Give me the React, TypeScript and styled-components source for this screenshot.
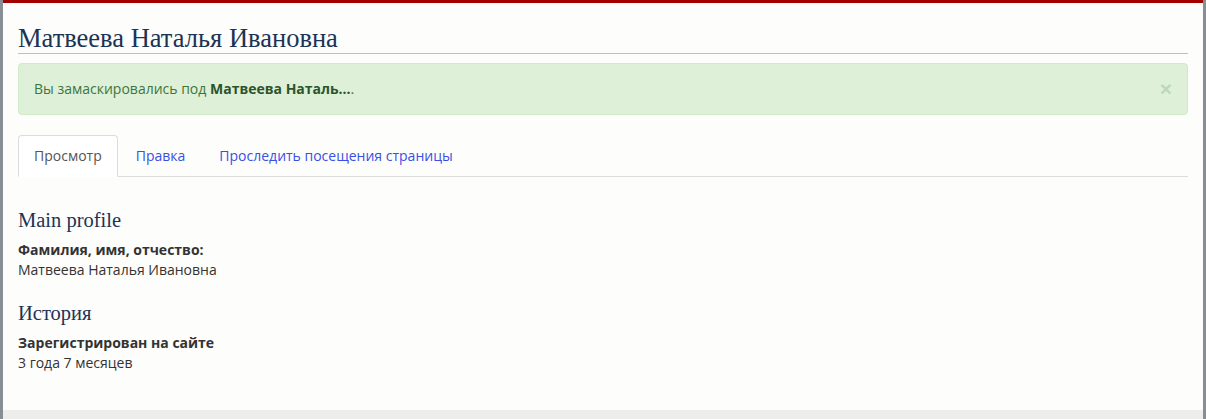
import styled, { createGlobalStyle } from 'styled-components';

const GlobalStyle = createGlobalStyle`
  html, body {
    margin: 0;
    padding: 0;
    background: #ededeb;
  }
  body {
    font-family: "Open Sans", "Liberation Sans", sans-serif;
    font-size: 14px;
    line-height: 20px;
    color: #333;
  }
`;

const Frame = styled.div`
  border-left: 3px solid #878e94;
  border-right: 3px solid #878e94;
  min-height: 419px;
  box-sizing: border-box;
  background: #ededeb;
`;

const Main = styled.main`
  background: #fdfdfb;
  border-top: 3px solid #a30000;
  height: 410px;
  box-sizing: border-box;
  padding: 20px 15px 0;
`;

const Title = styled.h1`
  margin: 0;
  font-family: "Liberation Serif", serif;
  font-weight: normal;
  font-size: 26.5px;
  line-height: 30px;
  color: #1b3456;
  border-bottom: 1px solid #b8c0c8;
`;

const Alert = styled.div`
  margin-top: 9px;
  display: flex;
  align-items: center;
  justify-content: space-between;
  padding: 15px;
  background: #dff0d8;
  border: 1px solid #d0e9c6;
  border-radius: 4px;
  color: #3c763d;

  b {
    color: #2b542c;
  }
`;

const Close = styled.span`
  font-family: "Liberation Sans", sans-serif;
  font-size: 21px;
  font-weight: bold;
  color: #3c763d;
  opacity: 0.2;
  line-height: 20px;
`;

const Tabs = styled.ul`
  list-style: none;
  margin: 20px 0 0;
  padding: 0;
  display: flex;
  border-bottom: 1px solid #ddd;
`;

const Tab = styled.li<{ $active?: boolean }>`
  margin-right: 2px;
  margin-bottom: -1px;

  a {
    display: block;
    padding: 10px 15px;
    line-height: 20px;
    border: 1px solid ${(p) => (p.$active ? '#ddd' : 'transparent')};
    border-bottom-color: transparent;
    border-radius: 4px 4px 0 0;
    background: ${(p) => (p.$active ? '#fff' : 'transparent')};
    color: ${(p) => (p.$active ? '#555' : '#3b4fe4')};
    text-decoration: none;
  }
`;

const Section = styled.h3<{ $first?: boolean }>`
  margin: ${(p) => (p.$first ? '30px' : '20px')} 0 7px;
  font-family: "Liberation Serif", serif;
  font-weight: normal;
  font-size: 20.5px;
  line-height: 26px;
  color: #1b3456;
`;

const Field = styled.div`
  margin-bottom: 10px;
`;

const Label = styled.div`
  font-weight: bold;
`;

export default function App() {
  return (
    <Frame>
      <GlobalStyle />
      <Main>
        <Title>Матвеева Наталья Ивановна</Title>
        <Alert>
          <span>
            Вы замаскировались под <b>Матвеева Наталь...</b>.
          </span>
          <Close>×</Close>
        </Alert>
        <Tabs>
          <Tab $active>
            <a href="#">Просмотр</a>
          </Tab>
          <Tab>
            <a href="#">Правка</a>
          </Tab>
          <Tab>
            <a href="#">Проследить посещения страницы</a>
          </Tab>
        </Tabs>
        <Section $first>Main profile</Section>
        <Field>
          <Label>Фамилия, имя, отчество:</Label>
          <div>Матвеева Наталья Ивановна</div>
        </Field>
        <Section>История</Section>
        <Field>
          <Label>Зарегистрирован на сайте</Label>
          <div>3 года 7 месяцев</div>
        </Field>
      </Main>
    </Frame>
  );
}
